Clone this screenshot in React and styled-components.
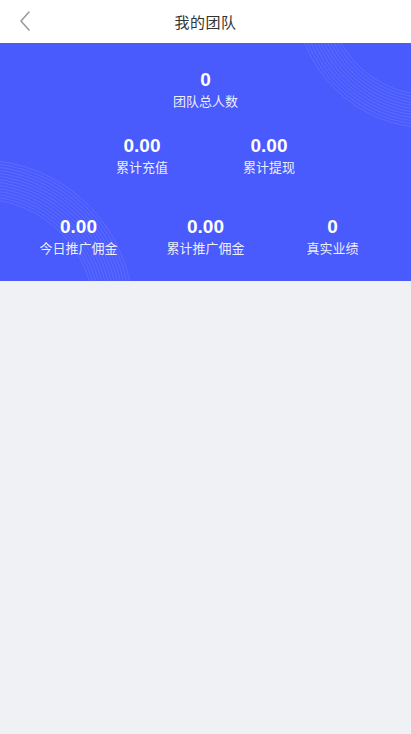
import React from 'react'
import styled, { createGlobalStyle } from 'styled-components'

const GlobalStyle = createGlobalStyle`
    html, body {
        margin: 0;
        padding: 0;
        background: #f0f1f4;
        font-family: "Noto Sans CJK SC", "Noto Sans", "Liberation Sans", sans-serif;
    }
`;

const topRings = Array.from({ length: 12 }, (_, i) => 102 + i * 3)
const bottomRings = Array.from({ length: 14 }, (_, i) => 114 + i * 3)

const Stat = ({ value, label }) => (
    <StatBox>
        <Value>{value}</Value>
        <Label>{label}</Label>
    </StatBox>
)

const App = () => {
    return (
        <Page>
            <GlobalStyle />
            <Header>
                <BackButton aria-label="back">
                    <svg width="14" height="22" viewBox="0 0 14 22" fill="none">
                        <path d="M11 2 L3 11 L11 20" stroke="#999" strokeWidth="1.5" strokeLinecap="round" strokeLinejoin="round" />
                    </svg>
                </BackButton>
                <Title>我的团队</Title>
            </Header>
            <Panel>
                <Rings viewBox="0 0 411 238" preserveAspectRatio="none">
                    {topRings.map(r => (
                        <circle key={'t' + r} cx="430" cy="-50" r={r} fill="none" stroke="rgba(255,255,255,0.13)" strokeWidth="0.8" />
                    ))}
                    {bottomRings.map(r => (
                        <circle key={'b' + r} cx="-20" cy="270" r={r} fill="none" stroke="rgba(255,255,255,0.13)" strokeWidth="0.8" />
                    ))}
                </Rings>
                <Row>
                    <Stat value="0" label="团队总人数" />
                </Row>
                <Row cols={2} gap="24px">
                    <Stat value="0.00" label="累计充值" />
                    <Stat value="0.00" label="累计提现" />
                </Row>
                <Row cols={3} gap="39px">
                    <Stat value="0.00" label="今日推广佣金" />
                    <Stat value="0.00" label="累计推广佣金" />
                    <Stat value="0" label="真实业绩" />
                </Row>
            </Panel>
        </Page>
    )
}

export default App

const Page = styled.div`
    min-height: 734px;
    background: #f0f1f4;
`;

const Header = styled.div`
    height: 43px;
    background: #fff;
    display: flex;
    align-items: center;
    justify-content: center;
    position: relative;
`;

const BackButton = styled.div`
    position: absolute;
    left: 18px;
    top: 10px;
    display: flex;
`;

const Title = styled.div`
    font-size: 15px;
    color: #333;
    letter-spacing: 0.5px;
`;

const Panel = styled.div`
    position: relative;
    overflow: hidden;
    height: 238px;
    box-sizing: border-box;
    background: #4a5bfd;
    padding: 26px 15px 0;
    display: flex;
    flex-direction: column;
`;

const Rings = styled.svg`
    position: absolute;
    left: 0;
    top: 0;
    width: 100%;
    height: 100%;
    pointer-events: none;
`;

const Row = styled.div`
    position: relative;
    display: grid;
    grid-template-columns: repeat(${p => p.cols || 1}, 127px);
    justify-content: center;
    margin-top: ${p => p.gap || '0'};
`;

const StatBox = styled.div`
    display: flex;
    flex-direction: column;
    align-items: center;
    color: #fff;
`;

const Value = styled.div`
    font-family: "Liberation Sans", "Noto Sans", sans-serif;
    font-weight: bold;
    font-size: 19px;
    line-height: 22px;
`;

const Label = styled.div`
    font-size: 13px;
    line-height: 20px;
    color: rgba(255, 255, 255, 0.92);
`;
